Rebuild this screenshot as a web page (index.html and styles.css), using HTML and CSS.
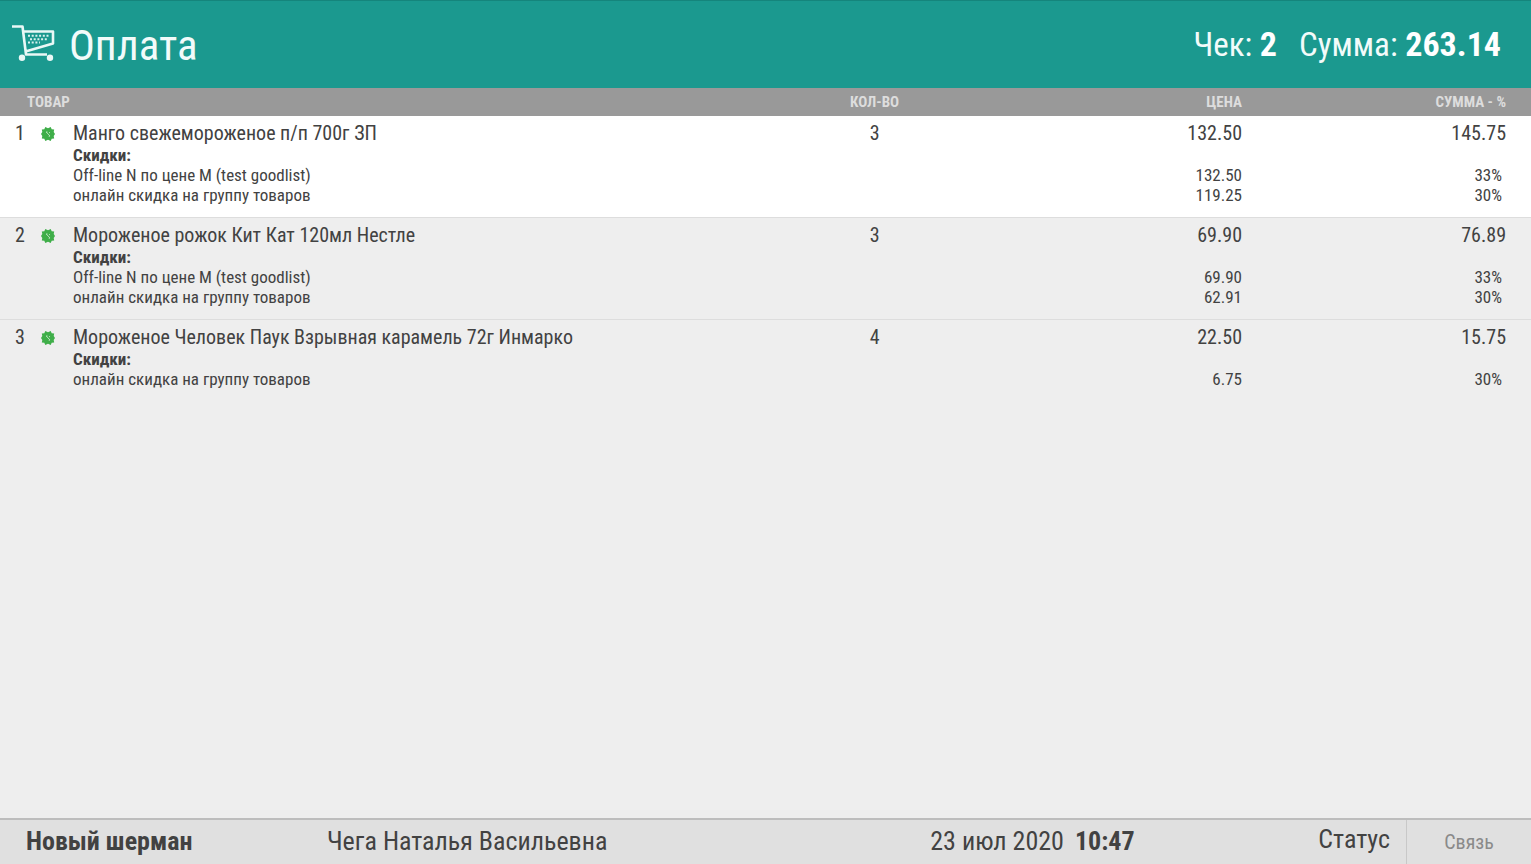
FILE: index.html
```html
<!DOCTYPE html>
<html lang="ru">
<head>
<meta charset="utf-8">
<meta name="viewport" content="width=device-width, initial-scale=1">
<title>Оплата</title>
<link rel="stylesheet" href="styles.css">
</head>
<body>
<svg class="symbols" aria-hidden="true">
  <symbol id="promo" viewBox="0 0 14 14">
    <path fill="#3fae49" d="M4.300 0 7 1.300 9.700 0l1 2.300 2.500.300-.500 2.300L14 7l-1.300 2.100.500 2.300-2.500.300-1 2.300L7 12.700 4.300 14l-1-2.300-2.500-.300.500-2.300L0 7l1.300-2.100-.500-2.300 2.500-.300z"/>
    <path stroke="#b5e2b8" stroke-width="1" fill="none" d="M5 5h1.500M5.200 5l3.800 4M7.700 9.200H9M8 5.200 9 6"/>
  </symbol>
</svg>
<header class="topbar">
  <svg class="cart" viewBox="0 0 44 40" aria-hidden="true">
    <path d="M0 1.500h10.500L14 29.500H35M11.500 6.500H41V18.500L13.500 26.500" fill="none" stroke="#e9f8f6" stroke-width="2.600" stroke-linejoin="round"/>
    <path d="M16 10.700h21M18 14.300h17M16 17.600h12" fill="none" stroke="#d9f2ef" stroke-width="2" stroke-dasharray="2 1.700"/>
    <circle cx="10" cy="32.800" r="3.200" fill="#e9f8f6"/>
    <circle cx="38" cy="32.800" r="3.200" fill="#e9f8f6"/>
  </svg>
  <h1 class="title">Оплата</h1>
  <p class="total">Чек: <b>2</b></p>
  <p class="total">Сумма: <b>263.14</b></p>
</header>
<main class="content">
  <table class="goods">
    <colgroup><col class="c-num"><col class="c-icon"><col><col class="c-qty"><col class="c-price"><col class="c-sum"></colgroup>
    <thead>
      <tr><th class="name-head" colspan="3" scope="col">ТОВАР</th><th class="qty" scope="col">КОЛ-ВО</th><th class="price" scope="col">ЦЕНА</th><th class="sum" scope="col">СУММА - %</th></tr>
    </thead>
    <tbody class="item selected">
      <tr class="main"><td class="num">1</td><td class="icon"><svg class="promo"><use href="#promo"/></svg></td><td>Манго свежемороженое п/п 700г ЗП</td><td class="qty">3</td><td class="price">132.50</td><td class="sum">145.75</td></tr>
      <tr class="sub"><td colspan="2"></td><td><b>Скидки:</b></td><td></td><td></td><td></td></tr>
      <tr class="sub"><td colspan="2"></td><td>Off-line N по цене M (test goodlist)</td><td></td><td class="price">132.50</td><td class="sum">33%</td></tr>
      <tr class="sub"><td colspan="2"></td><td>онлайн скидка на группу товаров</td><td></td><td class="price">119.25</td><td class="sum">30%</td></tr>
    </tbody>
    <tbody class="item">
      <tr class="main"><td class="num">2</td><td class="icon"><svg class="promo"><use href="#promo"/></svg></td><td>Мороженое рожок Кит Кат 120мл Нестле</td><td class="qty">3</td><td class="price">69.90</td><td class="sum">76.89</td></tr>
      <tr class="sub"><td colspan="2"></td><td><b>Скидки:</b></td><td></td><td></td><td></td></tr>
      <tr class="sub"><td colspan="2"></td><td>Off-line N по цене M (test goodlist)</td><td></td><td class="price">69.90</td><td class="sum">33%</td></tr>
      <tr class="sub"><td colspan="2"></td><td>онлайн скидка на группу товаров</td><td></td><td class="price">62.91</td><td class="sum">30%</td></tr>
    </tbody>
    <tbody class="item">
      <tr class="main"><td class="num">3</td><td class="icon"><svg class="promo"><use href="#promo"/></svg></td><td>Мороженое Человек Паук Взрывная карамель 72г Инмарко</td><td class="qty">4</td><td class="price">22.50</td><td class="sum">15.75</td></tr>
      <tr class="sub"><td colspan="2"></td><td><b>Скидки:</b></td><td></td><td></td><td></td></tr>
      <tr class="sub"><td colspan="2"></td><td>онлайн скидка на группу товаров</td><td></td><td class="price">6.75</td><td class="sum">30%</td></tr>
    </tbody>
  </table>
</main>
<footer class="statusbar">
  <b class="shop">Новый шерман</b>
  <span class="cashier">Чега Наталья Васильевна</span>
  <time class="clock" datetime="2020-07-23T10:47">23 июл 2020 <b>10:47</b></time>
  <span class="status">Статус</span>
  <button class="link" type="button">Связь</button>
</footer>
</body>
</html>
```
FILE: styles.css
```css
* { box-sizing: border-box; }
body {
  margin: 0;
  min-height: 100vh;
  display: flex;
  flex-direction: column;
  background: #eeeeee;
  color: #424242;
  font-family: "Roboto Condensed", Roboto, sans-serif;
}
.symbols { display: none; }
.topbar {
  display: flex;
  align-items: center;
  padding: 14px 30px 14px 12px;
  background: #1b998f;
  border-top: 1px solid #15857c;
  color: #f2fbfa;
}
.cart { width: 44px; height: 40px; margin-right: 13px; }
.title { margin: 0 auto 0 0; font-size: 43px; line-height: 58px; font-weight: 400; }
.total { margin: 0 0 0 22px; font-size: 33px; line-height: 58px; }
.total b { color: #ffffff; font-size: 34px; }
.content { flex: 1; }
.goods { width: 100%; border-collapse: collapse; table-layout: fixed; }
.c-num { width: 33px; }
.c-icon { width: 40px; }
.c-qty { width: 12%; }
.c-price { width: 18%; }
.c-sum { width: 289px; }
.goods th, .goods td { padding: 0; text-align: left; }
.goods th {
  height: 28px;
  background: #999999;
  color: #dddddd;
  font-size: 15px;
  line-height: 28px;
  font-weight: 700;
}
.goods .name-head { padding-left: 27px; }
.goods .num { padding-left: 15px; }
.goods .qty { text-align: center; }
.goods .price { text-align: right; }
.goods .sum { text-align: right; padding-right: 25px; }
.goods .sub .sum { padding-right: 29px; }
.item { border-bottom: 1px solid #dddddd; }
.item:last-child { border-bottom: 0; }
.selected { background: #ffffff; }
.goods .main td { height: 29px; padding-top: 6px; font-size: 20px; line-height: 23px; }
.sub td { height: 20px; font-size: 17px; line-height: 20px; }
.goods .item tr:last-child td { height: 32px; padding-bottom: 12px; }
.goods .icon { padding-left: 8px; }
.promo { display: block; width: 14px; height: 14px; }
.statusbar {
  display: flex;
  align-items: stretch;
  border-top: 2px solid #bdbdbd;
  background: #e0e0e0;
  font-size: 26px;
  line-height: 42px;
  padding-left: 26px;
}
.shop { width: 20%; }
.cashier { flex: 1; }
.clock { width: 388px; }
.clock b { margin-left: 5px; }
.status { padding-right: 16px; line-height: 38px; }
.link {
  width: 125px;
  min-height: 44px;
  padding: 0;
  border: 0;
  border-left: 1px solid #c8c8c8;
  background: none;
  color: #8a8a8a;
  font: inherit;
  font-size: 20px;
}
```
